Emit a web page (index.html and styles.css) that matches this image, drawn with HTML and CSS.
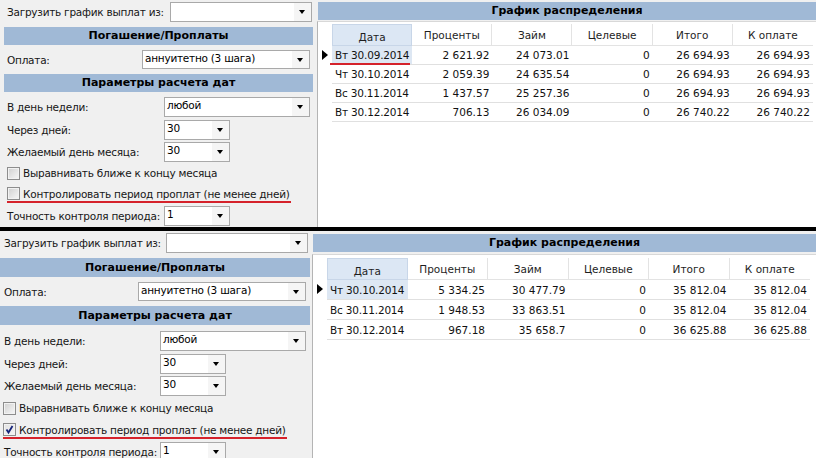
FILE: index.html
```html
<!DOCTYPE html>
<html lang="ru">
<head>
<meta charset="utf-8">
<link rel="stylesheet" href="styles.css">
</head>
<body>
<div class="screen">
  <section class="panel panel-top">
    <div class="left">
      <div class="row row-load"><span class="lbl lbl-load">Загрузить график выплат из:</span><span class="combo combo-load"><span class="val"></span><span class="btn"></span></span></div>
      <div class="band">Погашение/Проплаты</div>
      <div class="row row-pay"><span class="lbl lbl-pay">Оплата:</span><span class="combo combo-pay"><span class="val">аннуитетно (3 шага)</span><span class="btn"></span></span></div>
      <div class="band">Параметры расчета дат</div>
      <div class="row r1"><span class="lbl lbl-w">В день недели:</span><span class="combo combo-wide"><span class="val">любой</span><span class="btn"></span></span></div>
      <div class="row r2"><span class="lbl lbl-w">Через дней:</span><span class="combo combo-short"><span class="val">30</span><span class="btn"></span></span></div>
      <div class="row r3"><span class="lbl lbl-w">Желаемый день месяца:</span><span class="combo combo-short"><span class="val">30</span><span class="btn"></span></span></div>
      <div class="row r4 check"><span class="cb"></span><span>Выравнивать ближе к концу месяца</span></div>
      <div class="row r5 check"><span class="mark"><span class="cb"></span><span>Контролировать период проплат (не менее дней)</span></span></div>
      <div class="row r6"><span class="lbl lbl-w">Точность контроля периода:</span><span class="combo combo-short"><span class="val">1</span><span class="btn"></span></span></div>
    </div>
    <div class="right">
      <div class="band band-right">График распределения</div>
      <div class="grid">
        <table>
          <colgroup><col class="c-ind"><col class="c-col"><col class="c-col"><col class="c-col"><col class="c-col"><col class="c-col"><col class="c-col"></colgroup>
          <thead>
            <tr><th class="ind"></th><th class="hsel">Дата</th><th>Проценты</th><th>Займ</th><th>Целевые</th><th>Итого</th><th>К оплате</th></tr>
          </thead>
          <tbody>
            <tr><td class="ind"><span class="arrow"></span></td><td class="date sel marked">Вт 30.09.2014</td><td>2 621.92</td><td>24 073.01</td><td>0</td><td>26 694.93</td><td>26 694.93</td></tr>
            <tr><td class="ind"></td><td class="date">Чт 30.10.2014</td><td>2 059.39</td><td>24 635.54</td><td>0</td><td>26 694.93</td><td>26 694.93</td></tr>
            <tr><td class="ind"></td><td class="date">Вс 30.11.2014</td><td>1 437.57</td><td>25 257.36</td><td>0</td><td>26 694.93</td><td>26 694.93</td></tr>
            <tr><td class="ind"></td><td class="date">Вт 30.12.2014</td><td>706.13</td><td>26 034.09</td><td>0</td><td>26 740.22</td><td>26 740.22</td></tr>
          </tbody>
        </table>
      </div>
    </div>
  </section>
  <div class="divider"></div>
  <section class="panel panel-bottom">
    <div class="left">
      <div class="row row-load"><span class="lbl lbl-load">Загрузить график выплат из:</span><span class="combo combo-load"><span class="val"></span><span class="btn"></span></span></div>
      <div class="band">Погашение/Проплаты</div>
      <div class="row row-pay"><span class="lbl lbl-pay">Оплата:</span><span class="combo combo-pay"><span class="val">аннуитетно (3 шага)</span><span class="btn"></span></span></div>
      <div class="band">Параметры расчета дат</div>
      <div class="row r1"><span class="lbl lbl-w">В день недели:</span><span class="combo combo-wide"><span class="val">любой</span><span class="btn"></span></span></div>
      <div class="row r2"><span class="lbl lbl-w">Через дней:</span><span class="combo combo-short"><span class="val">30</span><span class="btn"></span></span></div>
      <div class="row r3"><span class="lbl lbl-w">Желаемый день месяца:</span><span class="combo combo-short"><span class="val">30</span><span class="btn"></span></span></div>
      <div class="row r4 check"><span class="cb"></span><span>Выравнивать ближе к концу месяца</span></div>
      <div class="row r5 check"><span class="mark"><span class="cb checked"><svg viewBox="0 0 11 11" width="11" height="11"><polyline points="2.5,5.5 4.5,8.5 8.5,2" fill="none" stroke="#16237a" stroke-width="1.8"/></svg></span><span>Контролировать период проплат (не менее дней)</span></span></div>
      <div class="row r6"><span class="lbl lbl-w">Точность контроля периода:</span><span class="combo combo-short"><span class="val">1</span><span class="btn"></span></span></div>
    </div>
    <div class="right">
      <div class="band band-right">График распределения</div>
      <div class="grid">
        <table>
          <colgroup><col class="c-ind"><col class="c-col"><col class="c-col"><col class="c-col"><col class="c-col"><col class="c-col"><col class="c-col"></colgroup>
          <thead>
            <tr><th class="ind"></th><th class="hsel">Дата</th><th>Проценты</th><th>Займ</th><th>Целевые</th><th>Итого</th><th>К оплате</th></tr>
          </thead>
          <tbody>
            <tr><td class="ind"><span class="arrow"></span></td><td class="date sel">Чт 30.10.2014</td><td>5 334.25</td><td>30 477.79</td><td>0</td><td>35 812.04</td><td>35 812.04</td></tr>
            <tr><td class="ind"></td><td class="date">Вс 30.11.2014</td><td>1 948.53</td><td>33 863.51</td><td>0</td><td>35 812.04</td><td>35 812.04</td></tr>
            <tr><td class="ind"></td><td class="date">Вт 30.12.2014</td><td>967.18</td><td>35 658.7</td><td>0</td><td>36 625.88</td><td>36 625.88</td></tr>
          </tbody>
        </table>
      </div>
    </div>
  </section>
</div>
</body>
</html>
```

FILE: styles.css
```css
* { box-sizing: border-box; }
html, body { margin: 0; padding: 0; }
body {
  width: 816px;
  height: 458px;
  overflow: hidden;
  background: #f0f0f0;
  font-family: "DejaVu Sans", sans-serif;
  font-size: 10.5px;
  color: #161616;
}
.screen { width: 816px; height: 458px; }
.panel { display: flex; height: 227px; overflow: hidden; }
.divider { height: 4px; background: #000; }

/* left form */
.left {
  width: 317px;
  flex: none;
  padding: 0 4px 0 4px;
  background: #f0f0f0;
  letter-spacing: -0.25px;
}
.panel-bottom .left { width: 312px; padding: 0 2px 0 0; }

.row { display: flex; align-items: center; white-space: nowrap; }
.lbl { flex: none; padding-left: 3px; }
.panel-bottom .lbl { padding-left: 4px; }
.lbl-load { width: 166px; }
.lbl-pay { width: 138px; }
.lbl-w { width: 160px; }

.row-load { height: 24px; }
.row-pay { height: 29px; }
.r1 { height: 22px; margin-top: 4px; }
.r2 { height: 23px; }
.r3 { height: 22px; }
.r4 { height: 20px; }
.r5 { height: 21px; }
.r6 { height: 23px; }
.panel-bottom .r1 { margin-top: 5px; }
.panel-bottom .r4 { height: 22px; }
.panel-bottom .r5 { height: 21px; }

.band {
  height: 18px;
  margin-top: 3px;
  background: #a0b9d6;
  color: #000;
  font-weight: bold;
  font-size: 11px;
  letter-spacing: 0;
  text-align: center;
  line-height: 18px;
}
.row-pay + .band { margin-top: 0; }
.panel-bottom .band { height: 19px; line-height: 19px; }

.combo {
  display: flex;
  height: 20px;
  background: #fff;
  border: 1px solid #a9a9a9;
}
.combo-load { width: 142px; }
.combo-pay { width: 168px; height: 19px; }
.combo-wide { width: 146px; }
.combo-short { width: 66px; }
.combo .val { flex: 1; padding: 0 2px; line-height: 15px; color: #000; overflow: hidden; }
.combo .btn { width: 17px; position: relative; background: #f5f5f5; }
.combo .btn::after {
  content: "";
  position: absolute;
  left: 5px;
  top: 7px;
  border-left: 3.5px solid transparent;
  border-right: 3.5px solid transparent;
  border-top: 4px solid #000;
}

.check { padding-left: 3px; }
.cb {
  width: 13px;
  height: 13px;
  flex: none;
  margin-right: 3px;
  border: 1px solid #8d8d8d;
  background: linear-gradient(135deg, #cfcfcf 0%, #e6e6e6 55%, #f7f7f7 100%);
  box-shadow: inset 0 0 0 1px #f2f2f2;
  display: flex;
  align-items: center;
  justify-content: center;
}
.cb.checked { background: linear-gradient(135deg, #e2e2e2 0%, #f4f4f4 100%); }
.cb svg { display: block; }
.mark {
  display: inline-flex;
  align-items: center;
  padding: 0 1px 1px 0;
  margin-top: 3px;
  border-bottom: 2px solid #d5222b;
}

/* right grid */
.right {
  flex: 1;
  display: flex;
  flex-direction: column;
  background: #f0f0f0;
}
.band-right { margin-top: 2px; margin-left: 1px; }
.panel-bottom .band-right { margin-top: 3px; height: 18px; line-height: 18px; }
.grid {
  flex: 1;
  margin-top: 1px;
  background: #fff;
  border-left: 1px solid #b4b4b4;
  border-top: 1px solid #d8d8d8;
  padding-top: 2px;
}
.panel-bottom .grid { margin-top: 2px; padding-top: 3px; }

table {
  border-collapse: separate;
  border-spacing: 0;
  table-layout: fixed;
  width: 495px;
}
.panel-bottom table { width: 497px; }
.c-ind { width: 14px; }
.c-col { width: 80px; }
.panel-bottom .c-col { width: 80.5px; }
th {
  height: 22px;
  font-weight: normal;
  text-align: center;
  color: #1e1e1e;
  padding: 0;
  border-right: 1px solid #e3e3e3;
  border-bottom: 1px solid #e3e3e3;
}
th.ind { border-right: none; border-bottom: none; }
th.hsel {
  background: #dce7f4;
  border: 1px solid #c8d6e8;
  padding-top: 3px;
}
th:last-child { border-right: none; }
td {
  height: 19px;
  padding: 0 3px 0 0;
  text-align: right;
  white-space: nowrap;
  border-bottom: 1px solid #e0e0e0;
  color: #111;
}
.panel-bottom td { height: 20px; }
td.ind { border-bottom: none; position: relative; padding: 0; }
td.date { text-align: left; padding-left: 3px; letter-spacing: -0.2px; }
td.sel { background: #dde7f3; }
td.marked { position: relative; }
td.marked::after {
  content: "";
  position: absolute;
  left: -2px;
  right: 2px;
  bottom: -1px;
  height: 2px;
  background: #d5222b;
}
.arrow {
  position: absolute;
  left: 4px;
  top: 4px;
  border-top: 5px solid transparent;
  border-bottom: 5px solid transparent;
  border-left: 6px solid #000;
}
```
